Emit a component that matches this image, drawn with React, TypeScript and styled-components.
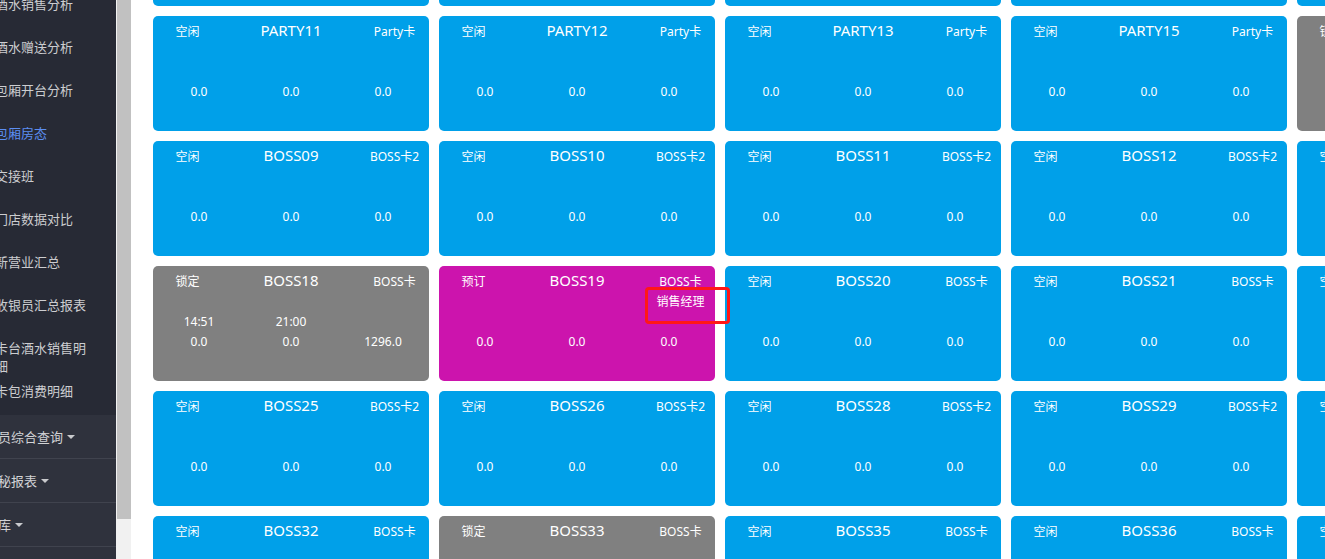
import React from "react";
import styled, { createGlobalStyle } from "styled-components";

const Global = createGlobalStyle`
  html, body { margin: 0; padding: 0; overflow: hidden; background: #fff; }
  body { font-family: "Noto Sans", "Noto Sans CJK SC", sans-serif; }
  * { box-sizing: border-box; }
`;

const Page = styled.div`
  display: flex;
  width: 1325px;
  height: 559px;
  overflow: hidden;
`;

const Sidebar = styled.nav`
  width: 116px;
  flex: none;
  height: 100%;
  background: #2f323d;
  overflow: hidden;
  font-family: "Noto Sans CJK SC", sans-serif;
  font-size: 13px;
`;

const SideInner = styled.div`
  width: 151px;
  margin-left: -35px;
  margin-top: -17.5px;
`;

const SubList = styled.ul`
  list-style: none;
  margin: 0;
  padding: 0 0 2px 0;
  background: #272a35;
`;

const SubItem = styled.li<{ $active?: boolean }>`
  height: 43px;
  padding: 12.5px 20px 0 30px;
  line-height: 18px;
  color: ${(p) => (p.$active ? "#5c8ef2" : "#cccdd0")};
  white-space: normal;
`;

const TopItem = styled.div`
  height: 44px;
  padding-left: 20px;
  color: #d2d3d6;
  border-bottom: 1px solid #40434e;
  white-space: nowrap;
  display: flex;
  align-items: center;
`;

const Caret = styled.span`
  display: inline-block;
  width: 0;
  height: 0;
  margin-left: 4px;
  margin-top: 1px;
  border-top: 4px solid #c9cacd;
  border-left: 4px solid transparent;
  border-right: 4px solid transparent;
`;

const ScrollTrack = styled.div`
  width: 15px;
  flex: none;
  height: 100%;
  background: #f1f1f1;
  display: flex;
  flex-direction: column;
`;

const ScrollThumb = styled.div`
  height: 519px;
  margin-left: 1px;
  background: #c1c1c1;
`;

const Main = styled.main`
  flex: 1;
  height: 100%;
  overflow: hidden;
  padding-left: 22px;
`;

const Grid = styled.div`
  display: grid;
  grid-template-columns: repeat(5, 276px);
  grid-auto-rows: 115px;
  gap: 10px;
  margin-top: -109px;
`;

const COLORS = {
  free: "#00a0e9",
  locked: "#808080",
  booked: "#cc14ad",
};

type Status = keyof typeof COLORS;

const Card = styled.div<{ $status: Status }>`
  position: relative;
  background: ${(p) => COLORS[p.$status]};
  border-radius: 5px;
  padding-top: 6px;
  color: #fff;
  font-size: 12px;
`;

const Header = styled.div`
  display: grid;
  grid-template-columns: 1fr 2fr 1fr;
  height: 40px;
`;

const Cell = styled.div`
  text-align: center;
  line-height: 20px;
  white-space: nowrap;
`;

const Name = styled.div`
  text-align: center;
  line-height: 17px;
  font-size: 15px;
  white-space: nowrap;
`;

const Line3 = styled.div`
  display: grid;
  grid-template-columns: repeat(3, 1fr);
  height: 20px;
`;

const Highlight = styled.div`
  position: absolute;
  z-index: 2;
  left: 206px;
  top: 21px;
  width: 85px;
  height: 37px;
  border: 3px solid #ff1717;
  border-radius: 4px;
  pointer-events: none;
`;

type Room = {
  status: Status;
  name: string;
  type: string;
  sales?: string;
  times?: string[];
  values?: string[];
  mark?: boolean;
};

const label: Record<Status, string> = { free: "空闲", locked: "锁定", booked: "预订" };

const r = (status: Status, name: string, type: string, extra: Partial<Room> = {}): Room => ({
  status,
  name,
  type,
  ...extra,
});

const rooms: Room[] = [
  r("free", "PARTY06", "Party卡"),
  r("free", "PARTY07", "Party卡"),
  r("free", "PARTY08", "Party卡"),
  r("free", "PARTY09", "Party卡"),
  r("free", "PARTY10", "Party卡"),

  r("free", "PARTY11", "Party卡"),
  r("free", "PARTY12", "Party卡"),
  r("free", "PARTY13", "Party卡"),
  r("free", "PARTY15", "Party卡"),
  r("locked", "BOSS01", "BOSS卡"),

  r("free", "BOSS09", "BOSS卡2"),
  r("free", "BOSS10", "BOSS卡2"),
  r("free", "BOSS11", "BOSS卡2"),
  r("free", "BOSS12", "BOSS卡2"),
  r("free", "BOSS15", "BOSS卡2"),

  r("locked", "BOSS18", "BOSS卡", { times: ["14:51", "21:00", ""], values: ["0.0", "0.0", "1296.0"] }),
  r("booked", "BOSS19", "BOSS卡", { sales: "销售经理", mark: true }),
  r("free", "BOSS20", "BOSS卡"),
  r("free", "BOSS21", "BOSS卡"),
  r("free", "BOSS22", "BOSS卡"),

  r("free", "BOSS25", "BOSS卡2"),
  r("free", "BOSS26", "BOSS卡2"),
  r("free", "BOSS28", "BOSS卡2"),
  r("free", "BOSS29", "BOSS卡2"),
  r("free", "BOSS30", "BOSS卡2"),

  r("free", "BOSS32", "BOSS卡"),
  r("locked", "BOSS33", "BOSS卡"),
  r("free", "BOSS35", "BOSS卡"),
  r("free", "BOSS36", "BOSS卡"),
  r("free", "BOSS37", "BOSS卡"),
];

const subItems = [
  "酒水销售分析",
  "酒水赠送分析",
  "包厢开台分析",
  "包厢房态",
  "交接班",
  "门店数据对比",
  "新营业汇总",
  "收银员汇总报表",
  "卡台酒水销售明细",
  "卡包消费明细",
];

const topItems = ["会员综合查询", "机秘报表", "仓库", "系统设置"];

function RoomCard({ room }: { room: Room }) {
  const values = room.values ?? ["0.0", "0.0", "0.0"];
  const times = room.times ?? ["", "", ""];
  return (
    <Card $status={room.status}>
      <Header>
        <Cell>{label[room.status]}</Cell>
        <Name>{room.name}</Name>
        <div>
          <Cell>{room.type}</Cell>
          {room.sales && <Cell>{room.sales}</Cell>}
        </div>
      </Header>
      <Line3>
        {times.map((t, i) => (
          <Cell key={i}>{t}</Cell>
        ))}
      </Line3>
      <Line3>
        {values.map((v, i) => (
          <Cell key={i}>{v}</Cell>
        ))}
      </Line3>
      {room.mark && <Highlight />}
    </Card>
  );
}

export default function App() {
  return (
    <>
      <Global />
      <Page>
        <Sidebar>
          <SideInner>
            <SubList>
              {subItems.map((s) => (
                <SubItem key={s} $active={s === "包厢房态"}>
                  {s}
                </SubItem>
              ))}
            </SubList>
            {topItems.map((t) => (
              <TopItem key={t}>
                {t}
                <Caret />
              </TopItem>
            ))}
          </SideInner>
        </Sidebar>
        <ScrollTrack>
          <ScrollThumb />
        </ScrollTrack>
        <Main>
          <Grid>
            {rooms.map((room) => (
              <RoomCard key={room.name} room={room} />
            ))}
          </Grid>
        </Main>
      </Page>
    </>
  );
}
